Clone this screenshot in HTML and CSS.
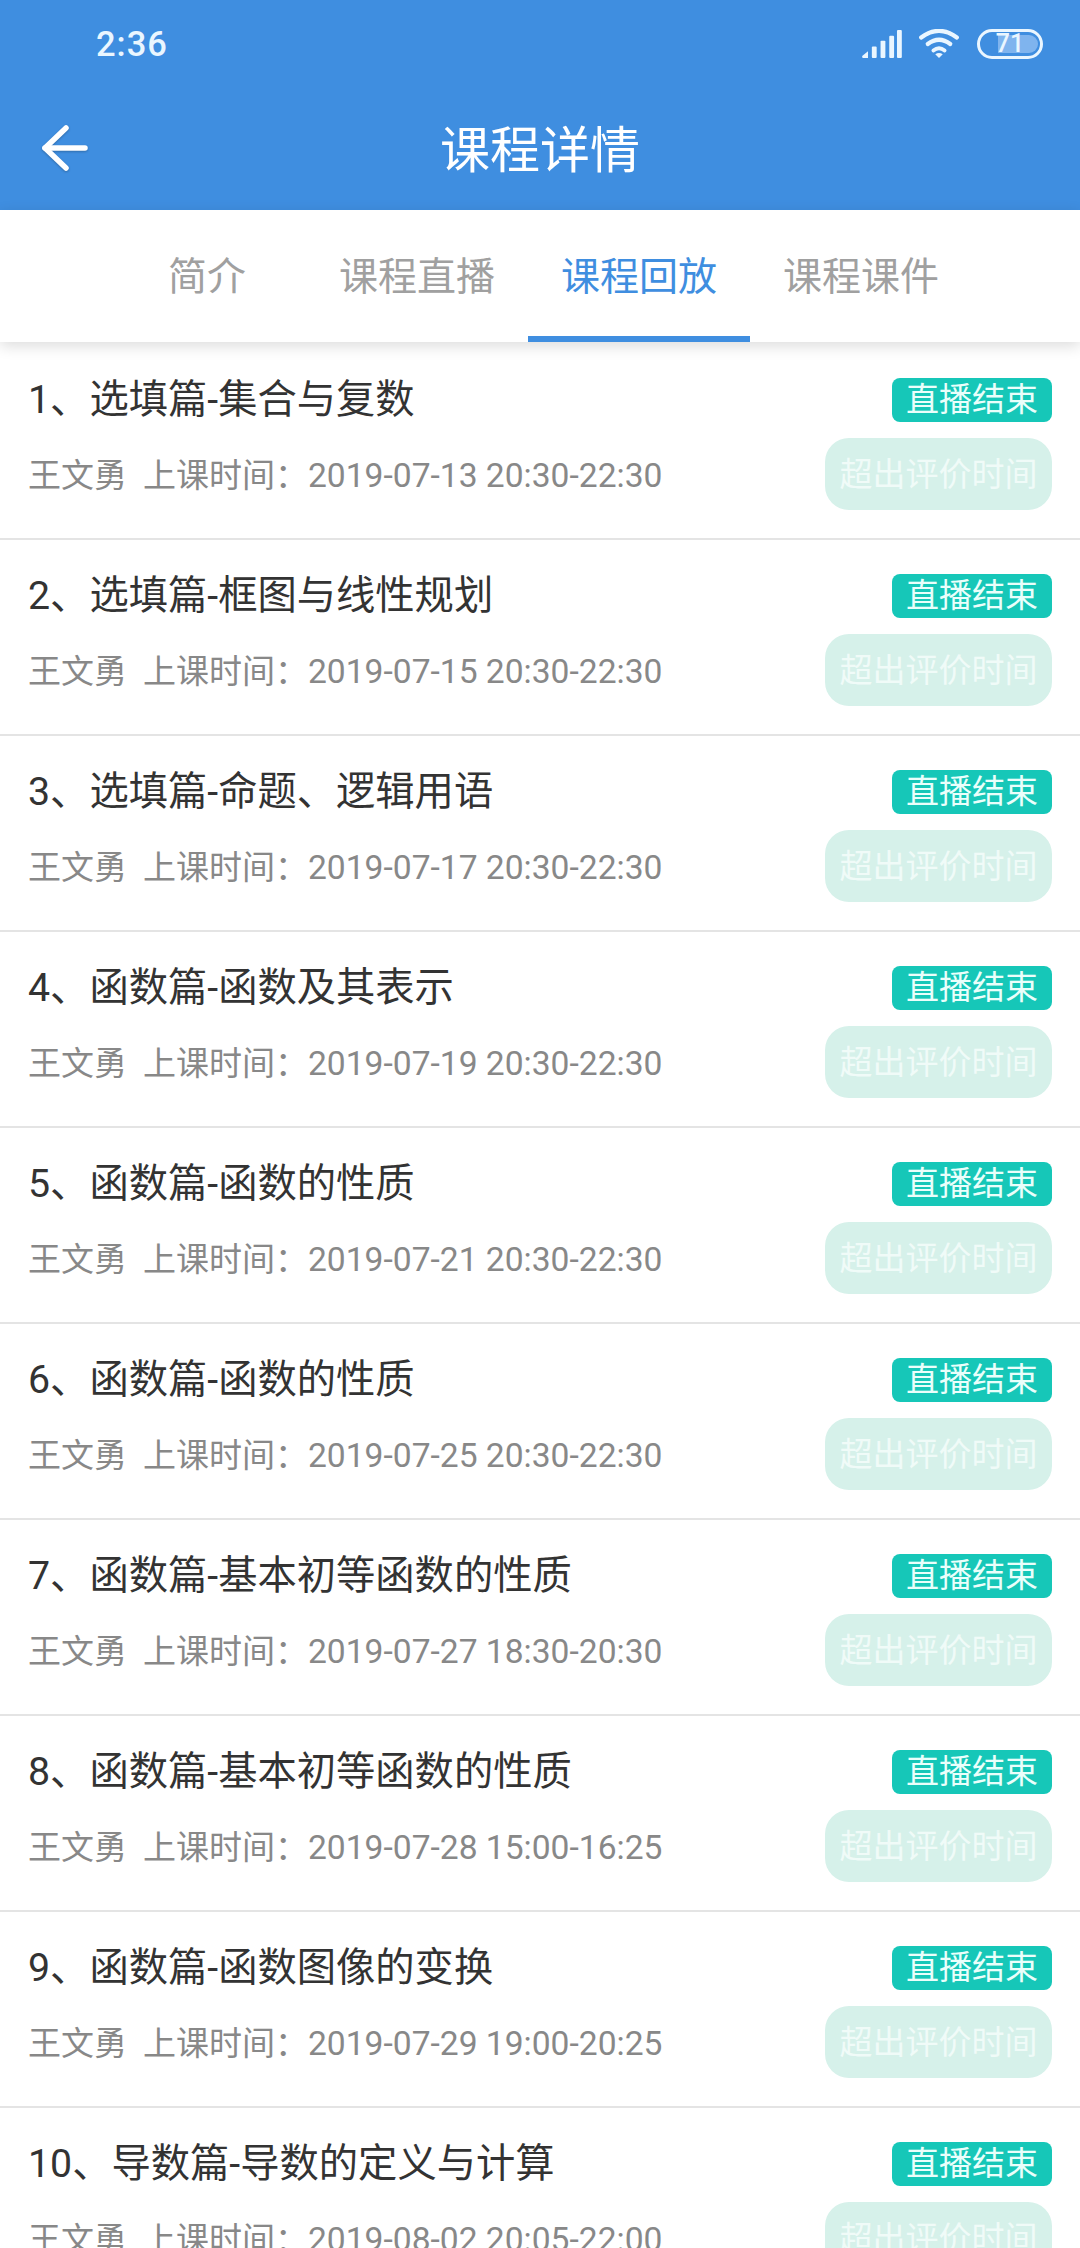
FILE: index.html
```html
<!DOCTYPE html>
<html lang="zh-CN">
<head>
  <meta charset="UTF-8">
  <meta name="viewport" content="width=device-width, initial-scale=1.0">
  <title>课程详情</title>
  <link rel="stylesheet" href="styles.css">
</head>
<body>
  <div class="header">
    <div class="status-bar">
      <span class="time">2:36</span>
      <div class="status-icons">
        <svg class="signal" width="40" height="29" viewBox="1 0 41 30" fill="#eaf6ff">
          <path d="M1 27 L7 22 V29 H2 Q1 29 1 28 Z"/>
          <rect x="11" y="17" width="5" height="12" rx="1"/>
          <rect x="20" y="11" width="5" height="18" rx="1"/>
          <rect x="29" y="6" width="5" height="23" rx="1"/>
          <rect x="37" y="0" width="5" height="29" rx="1"/>
        </svg>
        <svg class="wifi" width="42" height="30" viewBox="1 0 42 32" fill="none" stroke="#eaf6ff" stroke-width="4.5" stroke-linecap="round">
          <path d="M3 9 Q22 -5 41 9"/>
          <path d="M10 16 Q22 7 34 16"/>
          <path d="M16 23 Q22 18 28 23" stroke-width="4"/>
          <path d="M22 31 L18 27 Q22 24 26 27 Z" fill="#eaf6ff" stroke="none"/>
        </svg>
        <div class="battery">
          <div class="battery-fill"></div>
          <span class="battery-num">71</span>
        </div>
      </div>
    </div>
    <div class="title-bar">
      <svg class="back" width="50" height="50" viewBox="0 0 50 50" fill="none" stroke="#fff" stroke-width="5.5" stroke-linecap="round" stroke-linejoin="round">
        <path d="M44 25 H4"/>
        <path d="M25 5 L4 25 L25 45"/>
      </svg>
      <h1 class="page-title">课程详情</h1>
    </div>
  </div>

  <div class="tabs">
    <div class="tab tab-short">简介</div>
    <div class="tab">课程直播</div>
    <div class="tab tab-active">课程回放</div>
    <div class="tab">课程课件</div>
  </div>

  <div class="list">
    <div class="row">
      <div class="row-main">
        <div class="row-title">1、选填篇-集合与复数</div>
        <div class="row-meta"><span class="teacher">王文勇</span>上课时间：<span class="date">2019-07-13 20:30-22:30</span></div>
      </div>
      <div class="row-side">
        <span class="badge">直播结束</span>
        <span class="rate-btn">超出评价时间</span>
      </div>
    </div>
    <div class="row">
      <div class="row-main">
        <div class="row-title">2、选填篇-框图与线性规划</div>
        <div class="row-meta"><span class="teacher">王文勇</span>上课时间：<span class="date">2019-07-15 20:30-22:30</span></div>
      </div>
      <div class="row-side">
        <span class="badge">直播结束</span>
        <span class="rate-btn">超出评价时间</span>
      </div>
    </div>
    <div class="row">
      <div class="row-main">
        <div class="row-title">3、选填篇-命题、逻辑用语</div>
        <div class="row-meta"><span class="teacher">王文勇</span>上课时间：<span class="date">2019-07-17 20:30-22:30</span></div>
      </div>
      <div class="row-side">
        <span class="badge">直播结束</span>
        <span class="rate-btn">超出评价时间</span>
      </div>
    </div>
    <div class="row">
      <div class="row-main">
        <div class="row-title">4、函数篇-函数及其表示</div>
        <div class="row-meta"><span class="teacher">王文勇</span>上课时间：<span class="date">2019-07-19 20:30-22:30</span></div>
      </div>
      <div class="row-side">
        <span class="badge">直播结束</span>
        <span class="rate-btn">超出评价时间</span>
      </div>
    </div>
    <div class="row">
      <div class="row-main">
        <div class="row-title">5、函数篇-函数的性质</div>
        <div class="row-meta"><span class="teacher">王文勇</span>上课时间：<span class="date">2019-07-21 20:30-22:30</span></div>
      </div>
      <div class="row-side">
        <span class="badge">直播结束</span>
        <span class="rate-btn">超出评价时间</span>
      </div>
    </div>
    <div class="row">
      <div class="row-main">
        <div class="row-title">6、函数篇-函数的性质</div>
        <div class="row-meta"><span class="teacher">王文勇</span>上课时间：<span class="date">2019-07-25 20:30-22:30</span></div>
      </div>
      <div class="row-side">
        <span class="badge">直播结束</span>
        <span class="rate-btn">超出评价时间</span>
      </div>
    </div>
    <div class="row">
      <div class="row-main">
        <div class="row-title">7、函数篇-基本初等函数的性质</div>
        <div class="row-meta"><span class="teacher">王文勇</span>上课时间：<span class="date">2019-07-27 18:30-20:30</span></div>
      </div>
      <div class="row-side">
        <span class="badge">直播结束</span>
        <span class="rate-btn">超出评价时间</span>
      </div>
    </div>
    <div class="row">
      <div class="row-main">
        <div class="row-title">8、函数篇-基本初等函数的性质</div>
        <div class="row-meta"><span class="teacher">王文勇</span>上课时间：<span class="date">2019-07-28 15:00-16:25</span></div>
      </div>
      <div class="row-side">
        <span class="badge">直播结束</span>
        <span class="rate-btn">超出评价时间</span>
      </div>
    </div>
    <div class="row">
      <div class="row-main">
        <div class="row-title">9、函数篇-函数图像的变换</div>
        <div class="row-meta"><span class="teacher">王文勇</span>上课时间：<span class="date">2019-07-29 19:00-20:25</span></div>
      </div>
      <div class="row-side">
        <span class="badge">直播结束</span>
        <span class="rate-btn">超出评价时间</span>
      </div>
    </div>
    <div class="row">
      <div class="row-main">
        <div class="row-title">10、导数篇-导数的定义与计算</div>
        <div class="row-meta"><span class="teacher">王文勇</span>上课时间：<span class="date">2019-08-02 20:05-22:00</span></div>
      </div>
      <div class="row-side">
        <span class="badge">直播结束</span>
        <span class="rate-btn">超出评价时间</span>
      </div>
    </div>
  </div>
</body>
</html>
```

FILE: styles.css
```css
html, body {
  width: 100%;
  height: 100%;
  overflow: hidden;
}

body {
  margin: 0;
  padding: 0;
  background-color: #fff;
  font-family: 'Roboto', 'Noto Sans CJK SC', sans-serif;
}

.header {
  height: 210px;
  background-color: #3f8ee0;
  color: #fff;
}

.status-bar {
  box-sizing: border-box;
  height: 88px;
  display: flex;
  justify-content: space-between;
  align-items: center;
  padding: 0 37px 0 96px;
}

.time {
  font-size: 34.5px;
  font-weight: 500;
  letter-spacing: 1px;
  color: #eaf6ff;
}

.status-icons {
  display: flex;
  align-items: center;
  gap: 16px;
}

.battery {
  position: relative;
  box-sizing: border-box;
  width: 66px;
  height: 30px;
  margin-left: 1px;
  border: 3px solid #eaf6ff;
  border-radius: 15px;
  overflow: hidden;
}

.battery-fill {
  position: absolute;
  left: 18px;
  top: 3px;
  bottom: 3px;
  width: 40px;
  border-radius: 0 10px 10px 0;
  background-color: #7fb4ee;
}

.battery-num {
  position: absolute;
  left: 0;
  right: 0;
  top: 0;
  text-align: center;
  font-size: 25px;
  line-height: 24px;
  font-weight: 500;
  color: #eaf6ff;
}

.title-bar {
  position: relative;
  box-sizing: border-box;
  height: 122px;
  display: flex;
  justify-content: center;
  align-items: center;
  padding-bottom: 6px;
}

.back {
  position: absolute;
  left: 41px;
  top: 35px;
  filter: drop-shadow(0 1px 1px rgba(0, 0, 0, 0.25));
}

.page-title {
  margin: 0;
  font-size: 50px;
  font-weight: 400;
}

.tabs {
  position: relative;
  height: 132px;
  display: flex;
  justify-content: center;
  background-color: #fff;
  box-shadow: 0 4px 14px rgba(0, 0, 0, 0.14);
}

.tab {
  box-sizing: border-box;
  width: 222px;
  line-height: 134px;
  text-align: center;
  font-size: 39px;
  color: #a0a0a0;
}

.tab-short {
  width: 198px;
}

.tab-active {
  color: #3f8ee0;
  border-bottom: 6px solid #3f8ee0;
}

.list {
  padding-top: 2px;
}

.row {
  box-sizing: border-box;
  height: 196px;
  display: flex;
  justify-content: space-between;
  padding: 34px 28px 0;
  border-bottom: 2px solid #e4e4e4;
}

.row-title {
  font-size: 39.3px;
  line-height: 44px;
  color: #333;
}

.row-meta {
  margin-top: 31px;
  font-size: 33px;
  line-height: 46px;
  color: #888;
}

.teacher {
  margin-right: 16px;
}

.date {
  font-size: 33.6px;
}

.row-side {
  display: flex;
  flex-direction: column;
  align-items: flex-end;
}

.badge {
  width: 160px;
  height: 44px;
  border-radius: 8px;
  background-color: #16c7b8;
  color: #eafffb;
  text-align: center;
  font-size: 33px;
  line-height: 44px;
}

.rate-btn {
  box-sizing: border-box;
  width: 227px;
  height: 72px;
  margin-top: 16px;
  border-radius: 24px;
  background-color: #d6f1ea;
  color: #f0fbf8;
  text-align: center;
  font-size: 33px;
  line-height: 74px;
}
```
